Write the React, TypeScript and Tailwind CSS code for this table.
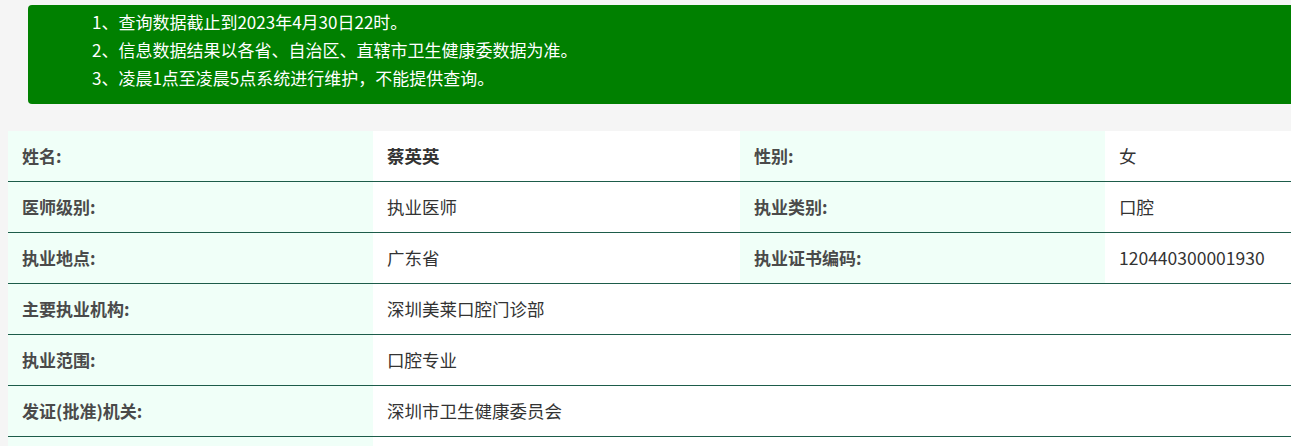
import { JSX } from 'react';

const NOTICES = [
  '1、查询数据截止到2023年4月30日22时。',
  '2、信息数据结果以各省、自治区、直辖市卫生健康委数据为准。',
  '3、凌晨1点至凌晨5点系统进行维护，不能提供查询。',
];

type Row = { label: string; value: string; label2?: string; value2?: string; strong?: boolean };

const ROWS: Row[] = [
  { label: '姓名:', value: '蔡英英', label2: '性别:', value2: '女', strong: true },
  { label: '医师级别:', value: '执业医师', label2: '执业类别:', value2: '口腔' },
  { label: '执业地点:', value: '广东省', label2: '执业证书编码:', value2: '120440300001930' },
  { label: '主要执业机构:', value: '深圳美莱口腔门诊部' },
  { label: '执业范围:', value: '口腔专业' },
  { label: '发证(批准)机关:', value: '深圳市卫生健康委员会' },
];

const labelCls =
  'w-[365px] shrink-0 bg-[#f0fff8] pl-[14px] flex items-center font-bold text-[#4a4a4a] text-[17px]';
const valueCls = 'bg-white pl-[14px] flex items-center text-[#333] text-[17.5px]';

const App = (): JSX.Element => {
  return (
    <div
      className="h-[446px] w-[1291px] overflow-hidden bg-[#f5f5f5]"
      style={{ fontFamily: '"Microsoft YaHei", "Noto Sans CJK SC", "Noto Sans", sans-serif' }}
    >
      {/* 提示 */}
      <div className="pt-[5px] pl-[28px]">
        <div className="w-[1300px] h-[99px] bg-[#008000] rounded-l-[4px] pl-[64px] pt-[3px] text-white text-[17px] leading-[28px]">
          {NOTICES.map((n) => (
            <p key={n}>{n}</p>
          ))}
        </div>
      </div>

      {/* 信息表 */}
      <div className="mt-[27px] ml-[8px] w-[1470px]">
        {ROWS.map((r) => (
          <div key={r.label} className="flex h-[51px] border-b border-[#1d5c4a]">
            <div className={labelCls}>{r.label}</div>
            {r.label2 ? (
              <>
                <div className={`${valueCls} w-[367px] shrink-0 ${r.strong ? 'font-bold text-[#111]' : ''}`}>
                  {r.value}
                </div>
                <div className={labelCls}>{r.label2}</div>
                <div className={`${valueCls} flex-1`}>{r.value2}</div>
              </>
            ) : (
              <div className={`${valueCls} flex-1`}>{r.value}</div>
            )}
          </div>
        ))}
        <div className="flex h-[51px]">
          <div className={labelCls} />
          <div className={`${valueCls} flex-1`} />
        </div>
      </div>
    </div>
  );
};

export default App;
